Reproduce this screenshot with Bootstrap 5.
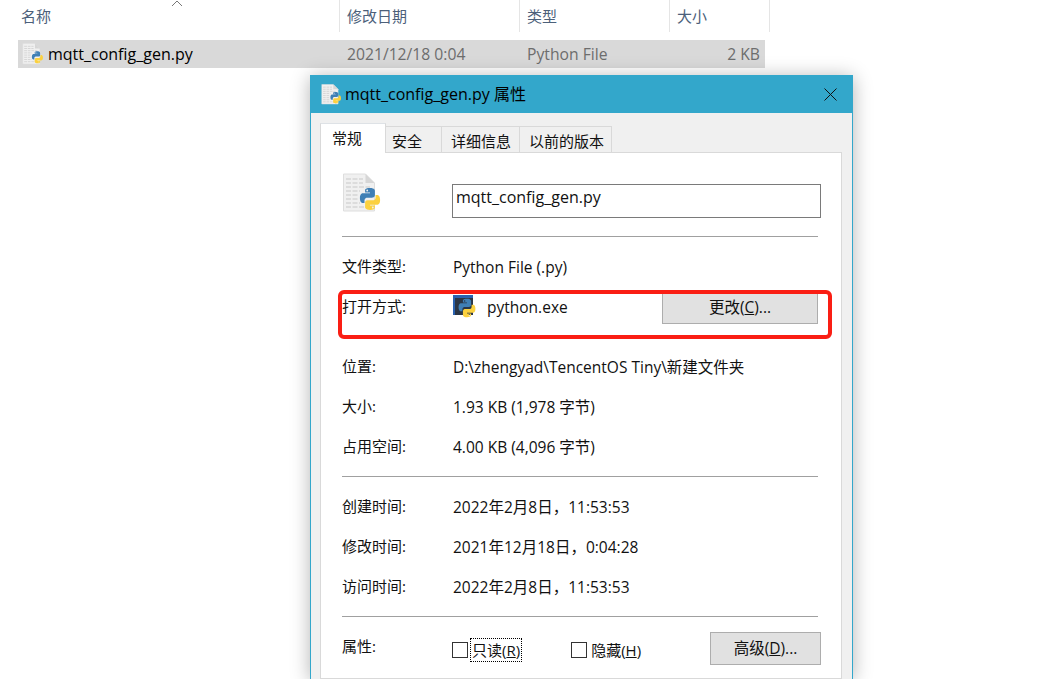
<!DOCTYPE html>
<html lang="zh-CN">
<head>
    <meta charset="UTF-8">
    <title>mqtt_config_gen.py 属性</title>
    <link rel="stylesheet" href="https://cdn.jsdelivr.net/npm/bootstrap@5.3.0/dist/css/bootstrap.min.css">
    <script src="https://cdn.jsdelivr.net/npm/bootstrap@5.3.0/dist/js/bootstrap.bundle.min.js"></script>
    <style>
        html, body { height: 100%; }
        body { font-family: "Open Sans", "Noto Sans CJK SC", sans-serif; font-size: 15.7px; color: #111; background: #fff; position: relative; overflow: hidden; }

        /* explorer list behind the dialog */
        .head-wrap { position: relative; height: 40px; }
        .head-cell { height: 32px; border-left: 1px solid #e5e5e5; padding: 7px 0 0 7px; color: #4c607a; line-height: 18px; font-size: 15px; }
        .head-name { padding: 7px 0 0 21px; color: #4c607a; line-height: 18px; width: 339px; height: 32px; font-size: 15px; }
        .w-date { width: 180px; }
        .w-type { width: 150px; }
        .w-size { width: 101px; border-right: 1px solid #e5e5e5; }
        .sort-arrow { position: absolute; left: 171px; top: 0; }
        .file-row { margin-left: 18px; width: 747px; height: 28px; background: #d9d9d9; line-height: 28px; }
        .file-name { width: 321px; padding-left: 4px; color: #000; font-size: 16px; }
        .file-name svg { margin-right: 4px; }
        .file-date { width: 180px; padding-left: 8px; color: #6d6d6d; }
        .file-type { width: 150px; padding-left: 8px; color: #6d6d6d; }
        .file-size { width: 96px; padding-right: 5px; text-align: right; color: #6d6d6d; }

        /* properties dialog */
        .prop-dialog { position: absolute; left: 310px; top: 75px; width: 543px; height: 604px; background: #f0f0f0; border: 1px solid #33a7cb; border-top: 0; border-bottom: 0; box-shadow: 0 2px 18px rgba(0, 0, 0, .3); }
        .prop-title { height: 38px; background: #33a7cb; padding-left: 10px; color: #000; font-size: 16px; }
        .title-icon { margin-right: 3px; }
        .prop-close { margin-left: auto; margin-right: 15px; }
        .prop-tabs { margin: 10px 0 0 9px; height: 30px; border: 0; align-items: flex-end; }
        .prop-tabs .nav-link { font-size: 15px; color: #111; background: #f0f0f0; border: 1px solid #d9d9d9; border-bottom: 0; border-left: 0; border-radius: 0; height: 27px; line-height: 28px; padding: 0 0 0 6px; margin: 0; text-align: left; white-space: nowrap; }
        .prop-tabs .nav-link.active { height: 30px; background: #fff; border-left: 1px solid #d9d9d9; border-right: 1px solid #d9d9d9; color: #111; line-height: 28px; padding: 0 0 0 11px; width: 66px; }
        .tab-w1 { width: 56px; }
        .tab-w2 { width: 78px; padding-left: 9px !important; }
        .tab-w3 { width: 92px; padding-left: 9px !important; }
        .prop-pane { margin-left: 9px; width: 522px; height: 526px; background: #fff; border: 1px solid #d9d9d9; border-top: 0; padding: 0 21px; position: relative; }
        .pane-line { position: absolute; top: -1px; left: 65px; right: -1px; border-top: 1px solid #d9d9d9; }
        .name-row { height: 83px; }
        .big-icon { width: 110px; flex: none; padding-top: 20px; }
        .name-input { flex: none; width: 369px; height: 34px; margin-top: 31px; border: 1px solid #7a7a7a; border-radius: 0; padding: 0 3px 8px; font-family: inherit; font-size: 16px; color: #111; }
        .name-input:focus { border-color: #7a7a7a; box-shadow: none; }
        .sep { border-top: 1px solid #a0a0a0; width: 476px; }
        .sep-tight { margin-top: 9px; }
        .prop-row { height: 40px; line-height: 20px; align-items: center; }
        .prop-key { width: 111px; flex: none; font-size: 15px; padding-bottom: 2px; }
        .prop-val { font-size: 15.5px; }
        .gap-top { margin-top: 10px; }
        .gap-wide { margin-top: 20px; }
        .win-btn { background: #e1e1e1; border: 1px solid #adadad; border-radius: 0; color: #111; font-size: 15.5px; padding: 0; height: 33px; line-height: 31px; }
        .btn-change { width: 156px; margin-left: auto; margin-right: 2px; }
        .btn-adv { width: 111px; margin-left: auto; margin-right: -1px; margin-top: 3px; }
        .exe-name { margin-left: 10px; }
        .tick { width: 16px; height: 16px; border: 1px solid #333; background: #fff; flex: none; margin-top: 6px; }
        .tick-first { margin-left: -1px; }
        .tick-second { margin-left: 50px; }
        .tick-label { font-size: 15px; padding: 1px 1px; margin-left: 3px; margin-top: 6px; line-height: 20px; }
        .tick-focus { outline: 1px dotted #000; }
        .label-second { margin-left: 3px; }
        .attr-row { height: 60px; }

        .red-mark { position: absolute; left: 338px; top: 290px; width: 494px; height: 49px; border: 4px solid #fa1e14; border-radius: 6px; pointer-events: none; }
    </style>
</head>
<body>
    <svg width="0" height="0" class="d-block">
        <defs>
            <symbol id="py-logo" viewBox="0 0 24 24">
                <path fill="#3f7fb5" d="M11.9 1C6.8 1 7.1 3.2 7.1 3.2v2.3h4.9v.7H5.2S1.9 5.8 1.9 11s2.9 5 2.9 5h1.7v-2.4s-.1-2.9 2.8-2.9h4.9s2.7 0 2.7-2.6V3.7S16.9 1 11.9 1zM9.2 2.6a.9.9 0 110 1.8.9.9 0 010-1.8z"/>
                <path fill="#fbd13f" transform="rotate(180 12 12)" d="M11.9 1C6.8 1 7.1 3.2 7.1 3.2v2.3h4.9v.7H5.2S1.9 5.8 1.9 11s2.9 5 2.9 5h1.7v-2.4s-.1-2.9 2.8-2.9h4.9s2.7 0 2.7-2.6V3.7S16.9 1 11.9 1zM9.2 2.6a.9.9 0 110 1.8.9.9 0 010-1.8z"/>
            </symbol>
            <symbol id="py-file" viewBox="0 0 40 40">
                <path fill="#f0f0f0" stroke="#dedede" d="M1.5 1h22l9 9v28h-31z"/>
                <path fill="#d6d6d6" d="M23.5 1v9h9z"/>
                <g stroke="#c8c8c8" stroke-width="1.2" stroke-dasharray="5 1.5">
                    <path d="M4 6h17M4 10h17M4 14h24M4 18h14M4 22h12M4 26h12M4 30h14M4 34h24"/>
                </g>
                <use href="#py-logo" x="16" y="14" width="24" height="24"/>
            </symbol>
        </defs>
    </svg>

    <div class="head-wrap d-flex">
        <div class="head-name">名称</div>
        <svg class="sort-arrow" width="12" height="7" viewBox="0 0 12 7"><path d="M1 6l5-5 5 5" fill="none" stroke="#777"/></svg>
        <div class="d-flex">
            <div class="head-cell w-date">修改日期</div>
            <div class="head-cell w-type">类型</div>
            <div class="head-cell w-size">大小</div>
        </div>
    </div>
    <div class="file-row d-flex">
        <div class="file-name d-flex align-items-center"><svg width="22" height="22"><use href="#py-file"/></svg>mqtt_config_gen.py</div>
        <div class="file-date">2021/12/18 0:04</div>
        <div class="file-type">Python File</div>
        <div class="file-size">2 KB</div>
    </div>

    <div class="prop-dialog">
        <div class="prop-title d-flex align-items-center">
            <svg class="title-icon" width="21" height="21"><use href="#py-file"/></svg>
            <span>mqtt_config_gen.py 属性</span>
            <svg class="prop-close" width="13" height="13" viewBox="0 0 13 13"><path d="M.5.5l12 12M12.5.5l-12 12" stroke="#111" fill="none"/></svg>
        </div>
        <ul class="nav nav-tabs prop-tabs">
            <li class="nav-item"><a class="nav-link active" href="#">常规</a></li>
            <li class="nav-item"><a class="nav-link tab-w1" href="#">安全</a></li>
            <li class="nav-item"><a class="nav-link tab-w2" href="#">详细信息</a></li>
            <li class="nav-item"><a class="nav-link tab-w3" href="#">以前的版本</a></li>
        </ul>
        <div class="prop-pane">
            <div class="pane-line"></div>
            <div class="name-row d-flex">
                <div class="big-icon"><svg width="40" height="40"><use href="#py-file"/></svg></div>
                <input class="form-control name-input" type="text" value="mqtt_config_gen.py">
            </div>
            <div class="sep"></div>
            <div class="prop-row d-flex gap-top">
                <div class="prop-key">文件类型:</div>
                <div class="prop-val">Python File (.py)</div>
            </div>
            <div class="prop-row d-flex">
                <div class="prop-key">打开方式:</div>
                <svg width="24" height="24" viewBox="0 0 24 24">
                    <rect x="0" y="0" width="20" height="20" fill="#2a3646"/>
                    <rect x="0" y="0" width="20" height="3" fill="#2a62b0"/>
                    <rect x="0" y="0" width="2" height="20" fill="#2a62b0"/>
                    <use href="#py-logo" x="4" y="3" width="20" height="20"/>
                </svg>
                <div class="prop-val exe-name">python.exe</div>
                <button class="btn win-btn btn-change" type="button">更改(<u>C</u>)...</button>
            </div>
            <div class="prop-row d-flex gap-wide">
                <div class="prop-key">位置:</div>
                <div class="prop-val">D:\zhengyad\TencentOS Tiny\新建文件夹</div>
            </div>
            <div class="prop-row d-flex">
                <div class="prop-key">大小:</div>
                <div class="prop-val">1.93 KB (1,978 字节)</div>
            </div>
            <div class="prop-row d-flex">
                <div class="prop-key">占用空间:</div>
                <div class="prop-val">4.00 KB (4,096 字节)</div>
            </div>
            <div class="sep sep-tight"></div>
            <div class="prop-row d-flex gap-top">
                <div class="prop-key">创建时间:</div>
                <div class="prop-val">2022年2月8日，11:53:53</div>
            </div>
            <div class="prop-row d-flex">
                <div class="prop-key">修改时间:</div>
                <div class="prop-val">2021年12月18日，0:04:28</div>
            </div>
            <div class="prop-row d-flex">
                <div class="prop-key">访问时间:</div>
                <div class="prop-val">2022年2月8日，11:53:53</div>
            </div>
            <div class="sep sep-tight"></div>
            <div class="attr-row d-flex align-items-center">
                <div class="prop-key">属性:</div>
                <div class="tick tick-first"></div>
                <div class="tick-label tick-focus">只读(<u>R</u>)</div>
                <div class="tick tick-second"></div>
                <div class="tick-label label-second">隐藏(<u>H</u>)</div>
                <button class="btn win-btn btn-adv" type="button">高级(<u>D</u>)...</button>
            </div>
        </div>
    </div>

    <div class="red-mark"></div>
</body>
</html>
